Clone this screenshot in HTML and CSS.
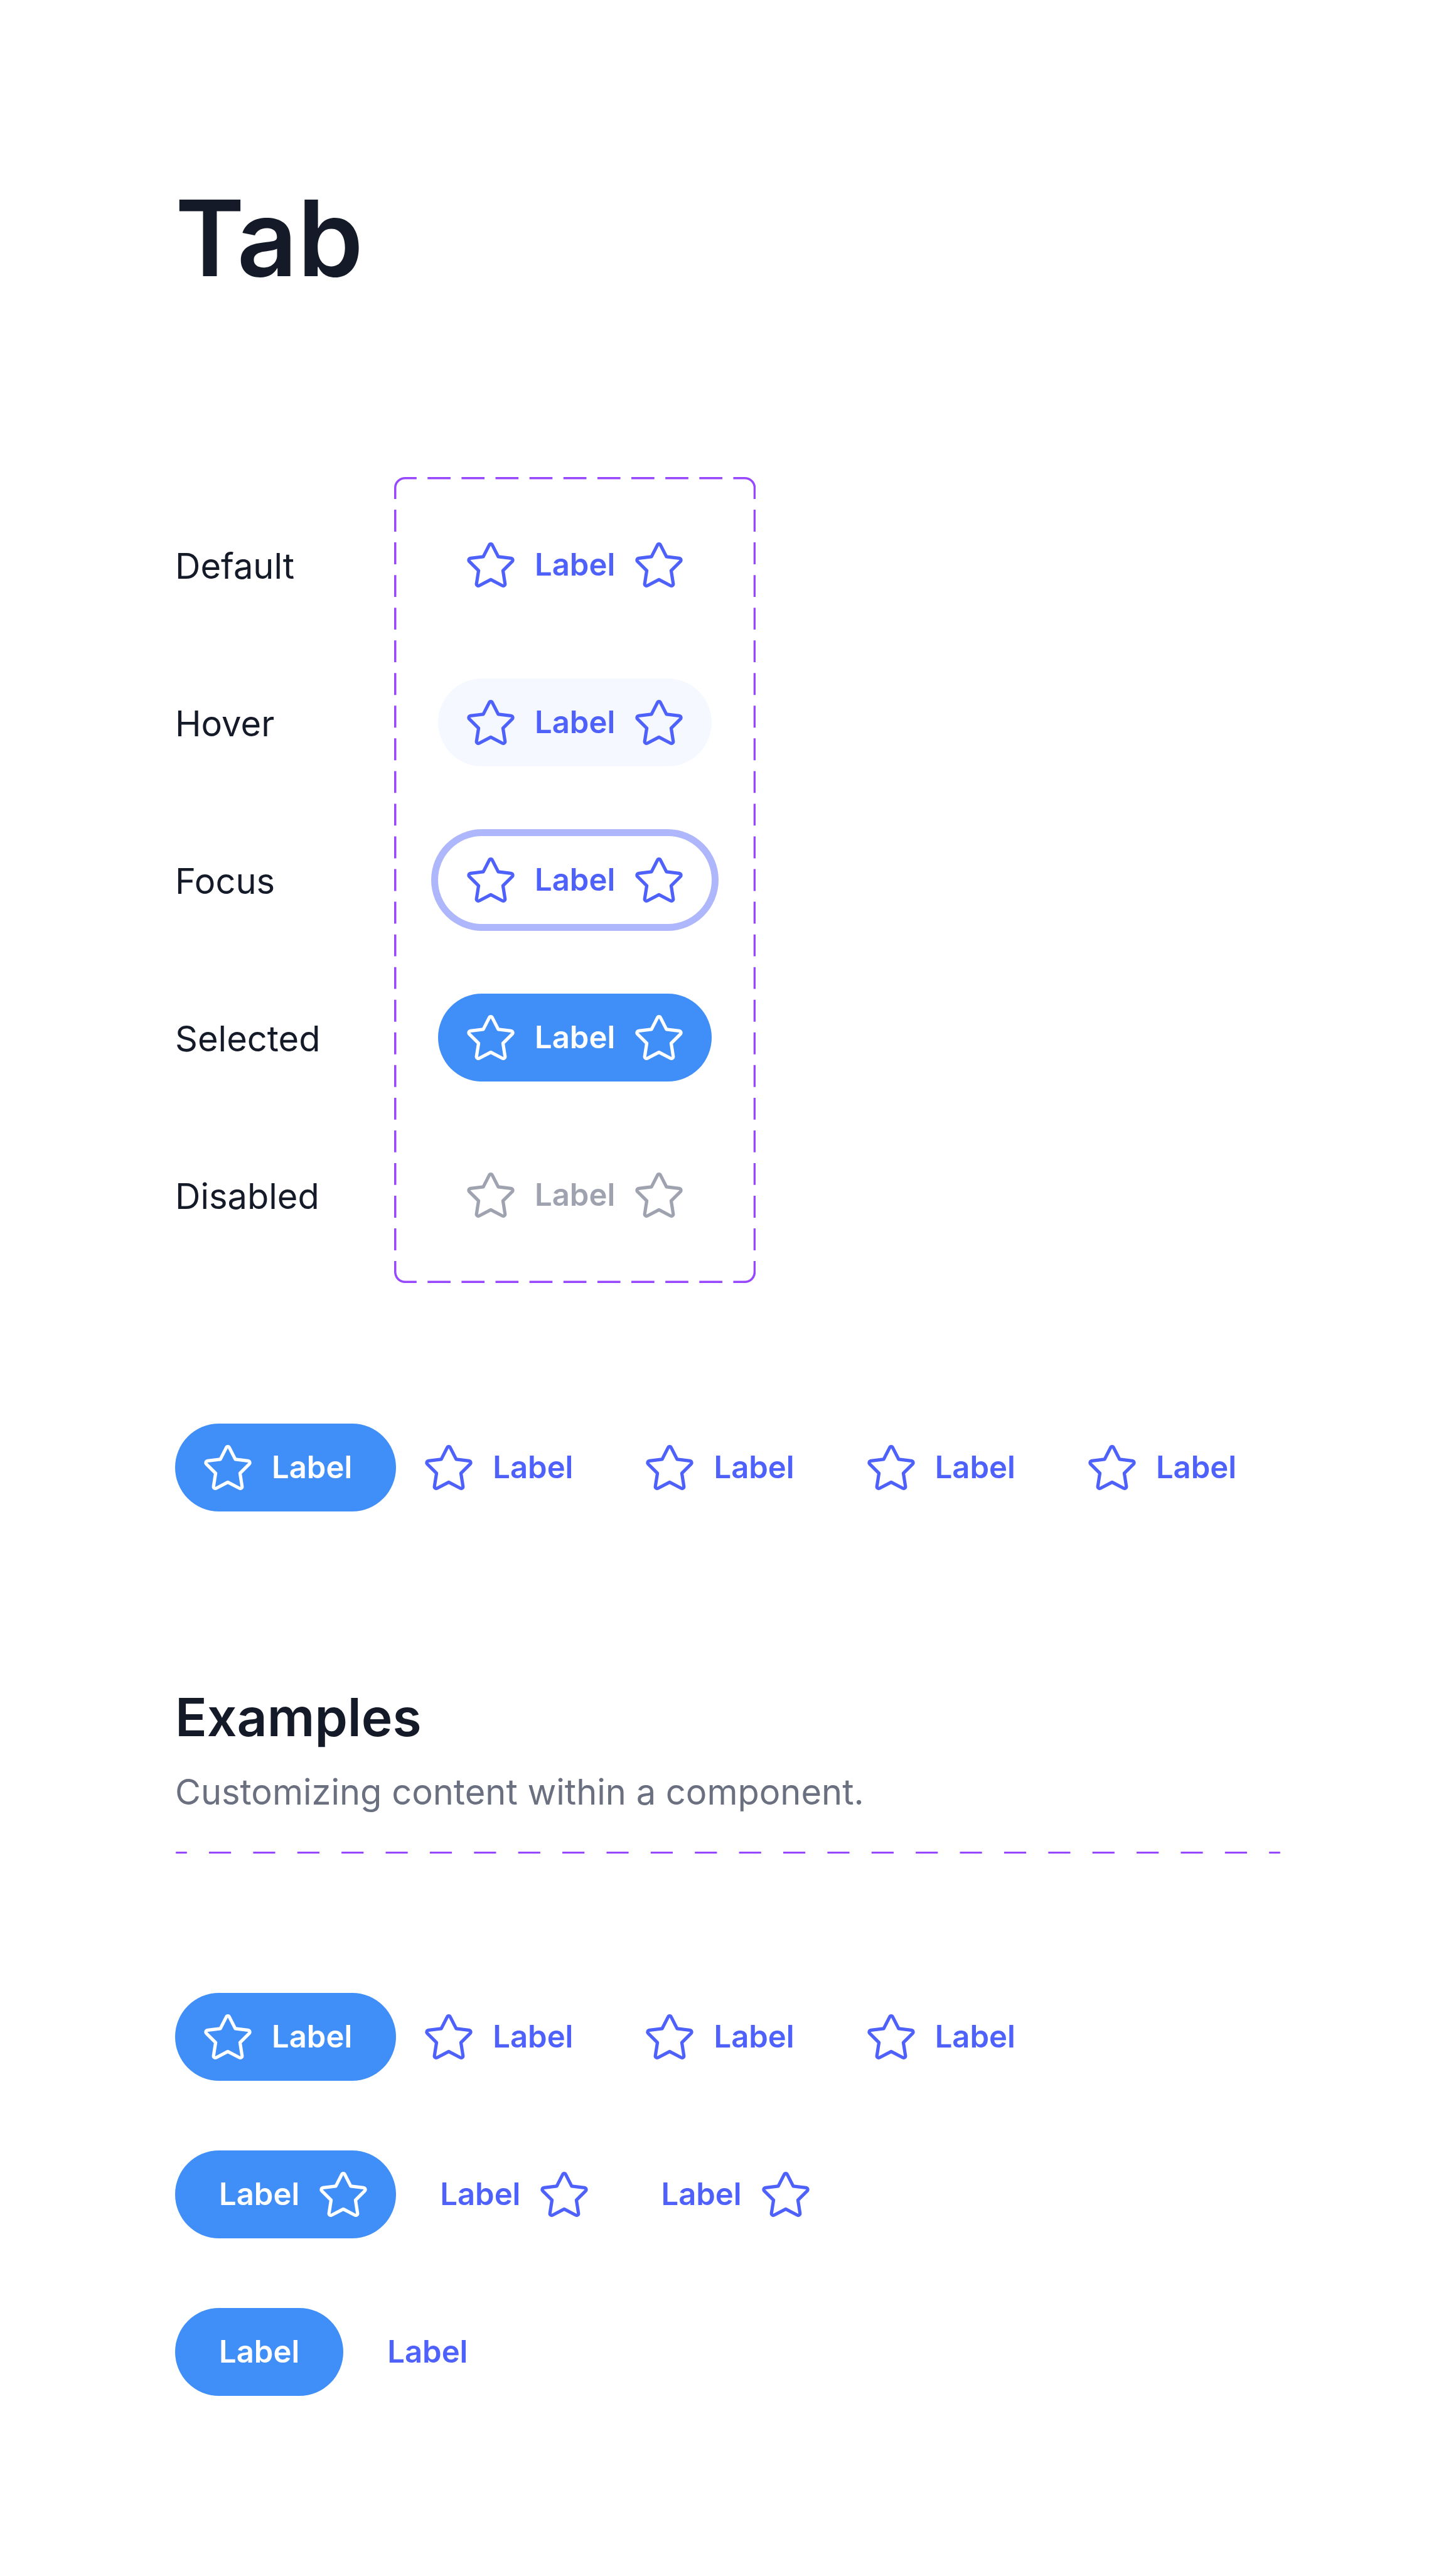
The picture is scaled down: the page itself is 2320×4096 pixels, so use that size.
FILE: index.html
```html
<!DOCTYPE html>
<html lang="en">
<head>
<meta charset="utf-8">
<meta name="viewport" content="width=device-width, initial-scale=1">
<title>Tab</title>
<link rel="stylesheet" href="styles.css">
</head>
<body>
<svg class="sprite" aria-hidden="true">
  <symbol id="star" viewBox="0 0 24 24">
    <path fill="none" stroke="currentColor" stroke-width="1.5" stroke-linejoin="round" d="M11.33 2.9C11.6 2.34 12.4 2.34 12.67 2.9L15.4 8.25L21.2 8.98C21.97 9.08 22.28 9.93 21.72 10.47L17.55 14.58L18.5 20.6C18.6 21.3 17.9 21.75 17.25 21.42L12 18.67L6.75 21.42C6.1 21.75 5.4 21.3 5.5 20.6L6.45 14.58L2.28 10.47C1.72 9.93 2.03 9.08 2.8 8.98L8.6 8.25Z"/>
  </symbol>
</svg>
<main class="page">
  <h1 class="title">Tab</h1>

  <section class="states" aria-label="States">
    <div class="state-names">
      <span class="state-name" id="s-default">Default</span>
      <span class="state-name" id="s-hover">Hover</span>
      <span class="state-name" id="s-focus">Focus</span>
      <span class="state-name" id="s-selected">Selected</span>
      <span class="state-name" id="s-disabled">Disabled</span>
    </div>
    <div class="frame">
      <svg class="frame-outline" viewBox="0 0 660 1472" preserveAspectRatio="none" aria-hidden="true">
        <g fill="none" stroke="currentColor" stroke-width="4">
          <path d="M2 40V20A18 18 0 0 1 20 2H41M619 2H640A18 18 0 0 1 658 20V40M658 1432V1452A18 18 0 0 1 640 1470H619M41 1470H20A18 18 0 0 1 2 1452V1432"/>
          <path stroke-dasharray="42 20" d="M61 2H599M61 1470H599"/>
          <path stroke-dasharray="40 19.667" d="M2 59.667V1412.5M658 59.667V1412.5"/>
        </g>
      </svg>
      <button class="tab tab-lead tab-trail" type="button" aria-describedby="s-default"><svg class="icon" aria-hidden="true"><use href="#star"/></svg>Label<svg class="icon" aria-hidden="true"><use href="#star"/></svg></button>
      <button class="tab tab-lead tab-trail is-hover" type="button" aria-describedby="s-hover"><svg class="icon" aria-hidden="true"><use href="#star"/></svg>Label<svg class="icon" aria-hidden="true"><use href="#star"/></svg></button>
      <button class="tab tab-lead tab-trail is-focus" type="button" aria-describedby="s-focus"><svg class="icon" aria-hidden="true"><use href="#star"/></svg>Label<svg class="icon" aria-hidden="true"><use href="#star"/></svg></button>
      <button class="tab tab-lead tab-trail is-selected" type="button" aria-describedby="s-selected"><svg class="icon" aria-hidden="true"><use href="#star"/></svg>Label<svg class="icon" aria-hidden="true"><use href="#star"/></svg></button>
      <button class="tab tab-lead tab-trail" type="button" disabled aria-describedby="s-disabled"><svg class="icon" aria-hidden="true"><use href="#star"/></svg>Label<svg class="icon" aria-hidden="true"><use href="#star"/></svg></button>
    </div>
  </section>

  <div class="tabs" role="tablist" aria-label="Tabs">
    <button class="tab tab-lead is-selected" type="button" role="tab" aria-selected="true"><svg class="icon" aria-hidden="true"><use href="#star"/></svg>Label</button>
    <button class="tab tab-lead" type="button" role="tab" aria-selected="false"><svg class="icon" aria-hidden="true"><use href="#star"/></svg>Label</button>
    <button class="tab tab-lead" type="button" role="tab" aria-selected="false"><svg class="icon" aria-hidden="true"><use href="#star"/></svg>Label</button>
    <button class="tab tab-lead" type="button" role="tab" aria-selected="false"><svg class="icon" aria-hidden="true"><use href="#star"/></svg>Label</button>
    <button class="tab tab-lead" type="button" role="tab" aria-selected="false"><svg class="icon" aria-hidden="true"><use href="#star"/></svg>Label</button>
  </div>

  <section class="examples">
    <header class="examples-head">
      <h2 class="heading">Examples</h2>
      <p class="lede">Customizing content within a component.</p>
      <svg class="rule" viewBox="0 0 2020 4" aria-hidden="true"><path fill="none" stroke="currentColor" stroke-width="4" stroke-dasharray="40.4 40.4" stroke-dashoffset="20.2" d="M0 2H2020"/></svg>
    </header>
    <div class="examples-list">
      <div class="tabs" role="tablist" aria-label="Leading icon">
        <button class="tab tab-lead is-selected" type="button" role="tab" aria-selected="true"><svg class="icon" aria-hidden="true"><use href="#star"/></svg>Label</button>
        <button class="tab tab-lead" type="button" role="tab" aria-selected="false"><svg class="icon" aria-hidden="true"><use href="#star"/></svg>Label</button>
        <button class="tab tab-lead" type="button" role="tab" aria-selected="false"><svg class="icon" aria-hidden="true"><use href="#star"/></svg>Label</button>
        <button class="tab tab-lead" type="button" role="tab" aria-selected="false"><svg class="icon" aria-hidden="true"><use href="#star"/></svg>Label</button>
      </div>
      <div class="tabs" role="tablist" aria-label="Trailing icon">
        <button class="tab tab-trail is-selected" type="button" role="tab" aria-selected="true">Label<svg class="icon" aria-hidden="true"><use href="#star"/></svg></button>
        <button class="tab tab-trail" type="button" role="tab" aria-selected="false">Label<svg class="icon" aria-hidden="true"><use href="#star"/></svg></button>
        <button class="tab tab-trail" type="button" role="tab" aria-selected="false">Label<svg class="icon" aria-hidden="true"><use href="#star"/></svg></button>
      </div>
      <div class="tabs" role="tablist" aria-label="Text only">
        <button class="tab is-selected" type="button" role="tab" aria-selected="true">Label</button>
        <button class="tab" type="button" role="tab" aria-selected="false">Label</button>
      </div>
    </div>
  </section>
</main>
</body>
</html>
```
FILE: styles.css
```css
:root {
  --ink: #141a28;
  --muted: #6b7080;
  --brand: #4f61fb;
  --selected: #408ef8;
  --hover: #f5f9ff;
  --ring: #afb7fc;
  --disabled: #9fa3b0;
  --outline: #9747ff;
}

* {
  box-sizing: border-box;
}

body {
  margin: 0;
  background: #fff;
  color: var(--ink);
  font-family: Inter, "Liberation Sans", sans-serif;
}

.sprite {
  display: none;
}

.page {
  padding: 279px 279px 278px;
}

.title {
  margin: 0 0 281px;
  font-size: 168px;
  font-weight: 600;
  line-height: 200px;
}

.states {
  display: flex;
  margin-bottom: 224px;
}

.state-names {
  display: flex;
  flex-direction: column;
  gap: 111px;
  width: 349px;
  padding-top: 72px;
}

.state-name {
  font-size: 56px;
  line-height: 140px;
}

.frame {
  position: relative;
  display: flex;
  flex-direction: column;
  gap: 111px;
  padding: 70px;
}

.frame-outline {
  position: absolute;
  inset: 0;
  width: 100%;
  height: 100%;
  color: var(--outline);
  pointer-events: none;
}

.tabs {
  display: flex;
}

.tab {
  display: flex;
  align-items: center;
  gap: 28px;
  height: 140px;
  padding: 0 70px;
  border: 0;
  border-radius: 70px;
  background: none;
  color: var(--brand);
  font-family: inherit;
  font-size: 49px;
  font-weight: 600;
  line-height: 84px;
}

.tab-lead {
  padding-left: 42px;
}

.tab-trail {
  padding-right: 42px;
}

.tab.is-hover {
  background: var(--hover);
}

.tab.is-focus {
  box-shadow: 0 0 0 11px var(--ring);
}

.tab.is-selected {
  background: var(--selected);
  color: #fff;
}

.tab:disabled {
  color: var(--disabled);
}

.icon {
  flex: none;
  width: 84px;
  height: 84px;
}

.examples {
  margin-top: 279px;
}

.heading {
  margin: 0 0 28px;
  font-size: 84px;
  font-weight: 600;
  line-height: 98px;
}

.lede {
  margin: 0 0 53px;
  color: var(--muted);
  font-size: 56px;
  line-height: 84px;
}

.rule {
  display: block;
  width: 100%;
  color: var(--outline);
}

.examples-list {
  display: flex;
  flex-direction: column;
  gap: 111px;
  margin-top: 222px;
}
```
